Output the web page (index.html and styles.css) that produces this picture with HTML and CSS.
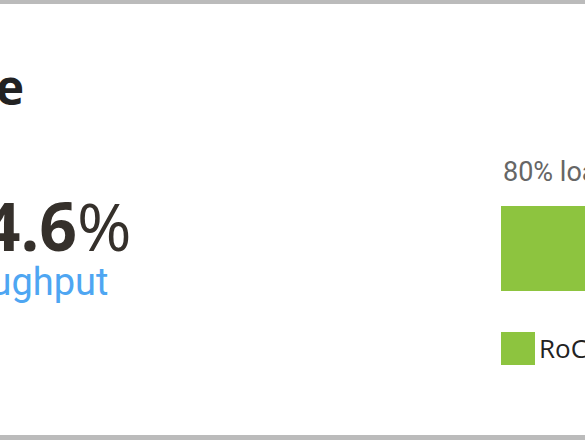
FILE: index.html
```html
<!DOCTYPE html>
<html lang="en">
<head>
  <meta charset="UTF-8">
  <title>Performance</title>
  <link rel="stylesheet" href="styles.css">
</head>
<body>

<div class="panel">
  <div class="main">
    <h1 class="title">Performance</h1>
    <div class="stat">
      <div class="stat-value">94.6<span class="pct">%</span></div>
      <div class="stat-label">throughput</div>
    </div>
  </div>

  <div class="chart">
    <div class="chart-caption">80% load</div>
    <div class="bars">
      <div class="bar"></div>
    </div>
    <div class="legend">
      <span class="swatch"></span>
      <span class="legend-text">RoCE</span>
    </div>
  </div>
</div>

</body>
</html>
```

FILE: styles.css
```css
html, body {
  margin: 0;
  height: 100%;
  overflow: hidden;
}
body {
  background: #bbbbbb;
  font-family: "Open Sans", sans-serif;
}
.panel {
  margin-top: 4px;
  height: 431px;
  background: white;
  display: flex;
  overflow: hidden;
}
.main {
  flex: none;
  width: 556px;
  margin-left: -55px;
}
.title {
  margin: 52px 0 0 -232px;
  font-size: 48px;
  font-weight: 700;
  color: #222;
  line-height: 1.3;
}
.stat {
  margin-top: 71px;
}
.stat-value {
  font-size: 66px;
  font-weight: 700;
  color: #35302b;
  line-height: 1.1;
}
.pct {
  font-weight: 400;
}
.stat-label {
  margin-left: -22px;
  font-family: Roboto, sans-serif;
  font-size: 38px;
  color: #4ea6f2;
  line-height: 1.1;
}
.chart {
  flex: none;
  width: 300px;
  padding-top: 152px;
}
.chart-caption {
  font-family: Roboto, sans-serif;
  font-size: 27px;
  color: #666;
  line-height: 1.2;
  padding-left: 2px;
}
.bars {
  margin-top: 18px;
  height: 85px;
}
.bar {
  width: 200px;
  height: 100%;
  background: #8dc43f;
}
.legend {
  margin-top: 39px;
  display: flex;
  align-items: center;
  gap: 4px;
}
.swatch {
  width: 34px;
  height: 33px;
  background: #8dc43f;
}
.legend-text {
  font-size: 26px;
  color: #222;
}
```
